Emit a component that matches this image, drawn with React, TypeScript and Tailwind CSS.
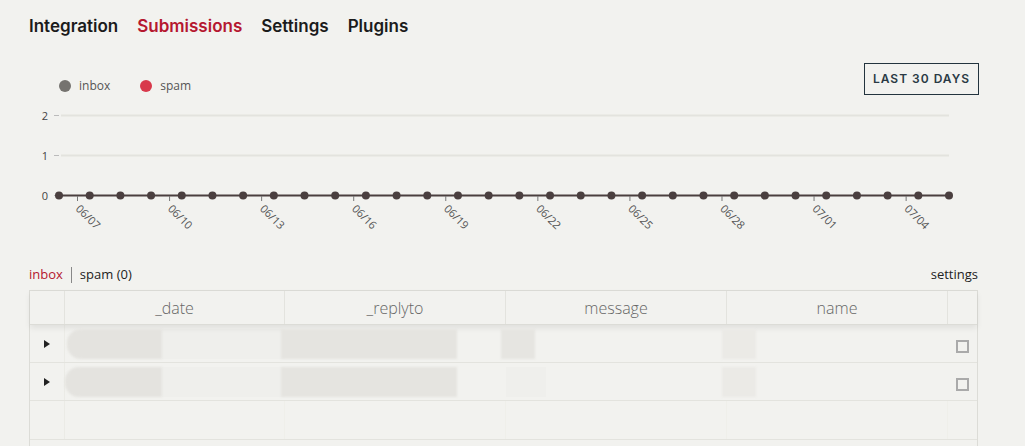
import React from "react";

const points = Array.from({ length: 30 }, (_, i) => 30 + (890 / 29) * i);
const ticks = ["06/07", "06/10", "06/13", "06/16", "06/19", "06/22", "06/25", "06/28", "07/01", "07/04"];

function Chart() {
  return (
    <svg width="949" height="140" viewBox="0 0 949 140" className="block" style={{ fontFamily: "'Open Sans', sans-serif" }}>
      {[0, 1, 2].map((v) => {
        const y = 95 - v * 40 + 0.5;
        return (
          <g key={v}>
            {v > 0 && <line x1="32" x2="920" y1={y} y2={y} stroke="#e3e3de" strokeWidth="2" />}
            <line x1="25" x2="30" y1={y} y2={y} stroke="#bbb" strokeWidth="1" />
            <text x="19" y={y + 4} fontSize="11" fill="#444" textAnchor="end">{v}</text>
          </g>
        );
      })}
      <line x1="30" x2="920" y1="95.5" y2="95.5" stroke="#4a3f3f" strokeWidth="2" />
      {ticks.map((t, k) => {
        const x = 48.5 + 92.07 * k;
        return (
          <g key={t}>
            <line x1={x} x2={x} y1="96" y2="101" stroke="#777" strokeWidth="1" />
            <text x={x - 1} y="110" fontSize="11" fill="#555" transform={`rotate(45 ${x - 1} 108)`}>{t}</text>
          </g>
        );
      })}
      {points.map((x, i) => (
        <circle key={i} cx={x} cy="95.5" r="4" fill="#4a3f3f" />
      ))}
    </svg>
  );
}

function Blob({ w, ml = 0, shade = "#e2e1dd", round = false }: { w: number; ml?: number; shade?: string; round?: boolean }) {
  return (
    <div
      className={`h-[30px] blur-[1px] ${round ? "rounded-l-[14px]" : ""}`}
      style={{ width: w, marginLeft: ml, background: shade }}
    />
  );
}

export default function App() {
  const cols = ["_date", "_replyto", "message", "name"];
  return (
    <div className="min-h-[446px] w-[1025px] bg-[#f2f2ef] pl-[29px] pr-[47px] overflow-hidden" style={{ fontFamily: "'Open Sans', sans-serif" }}>
      <nav className="flex gap-[19px] pt-[14px] h-[50px] text-[17px] font-semibold tracking-[0px]" style={{ fontFamily: "Inter, sans-serif" }}>
        <span className="text-[#1b1b1b]">Integration</span>
        <span className="text-[#b5172f]">Submissions</span>
        <span className="text-[#1b1b1b]">Settings</span>
        <span className="text-[#1b1b1b]">Plugins</span>
      </nav>

      <div className="flex justify-between items-start h-[50px] pt-[13px]">
        <div className="flex items-center mt-[14px] ml-[30px] text-[12px] text-[#555]">
          <span className="w-[12px] h-[12px] rounded-full bg-[#75736f]" />
          <span className="ml-[8px]">inbox</span>
          <span className="w-[12px] h-[12px] rounded-full bg-[#d8394b] ml-[30px]" />
          <span className="ml-[8px]">spam</span>
        </div>
        <button className="w-[115px] h-[32px] border border-[#23343e] text-[#2a3a44] text-[12px] font-semibold tracking-[1px] mr-[-1px]" style={{ fontFamily: "Inter, sans-serif" }}>
          LAST 30 DAYS
        </button>
      </div>

      <Chart />

      <div className="flex justify-between items-center mt-[23px] h-[24px] text-[13px]">
        <div className="flex items-center">
          <span className="text-[#b5172f]">inbox</span>
          <span className="mx-[8px] h-[16px] w-px bg-[#888]" />
          <span className="text-[#222]">spam (0)</span>
        </div>
        <span className="text-[#222]">settings</span>
      </div>

      <div className="mt-[3px] border-l border-r border-t border-[#dcdcd7] w-[949px]">
        <div className="flex h-[34px] border-b border-[#dcdcd7] shadow-[0_3px_6px_rgba(0,0,0,0.08)] relative text-[16px] text-[#666] font-light">
          <div className="w-[35px] border-r border-[#e3e3de]" />
          {cols.map((c, i) => (
            <div key={c} className={`${i === 0 ? "w-[220px]" : "w-[221px]"} flex items-center justify-center border-r border-[#e3e3de]`}>
              {c}
            </div>
          ))}
          <div className="flex-1" />
        </div>
        {[0, 1].map((r) => (
          <div key={r} className="flex h-[38px] border-b border-[#e3e3de]">
            <div className="w-[35px] flex items-center justify-center border-r border-[#ebebe6]">
              <svg width="8" height="10" viewBox="0 0 8 10"><path d="M1 1 L7 5 L1 9 Z" fill="#222" /></svg>
            </div>
            <div className="w-[220px] flex items-center">
              <Blob w={r === 0 ? 95 : 97} ml={r === 0 ? 2 : 0} round shade="#e4e3df" />
              <div className="h-[30px] flex-1 bg-[#efefec]" />
            </div>
            <div className="w-[221px] flex items-center">
              <Blob w={176} ml={-4} shade="#e5e4e0" />
            </div>
            <div className="w-[221px] flex items-center">
              {r === 0 ? <Blob w={34} ml={-5} shade="#e6e5e1" /> : <div className="h-[30px] w-[40px] bg-[#efefec]" />}
            </div>
            <div className="w-[221px] flex items-center">
              <Blob w={34} ml={-5} shade="#ebeae6" />
            </div>
            <div className="flex-1 flex items-center justify-center">
              <div className="w-[13px] h-[13px] border-2 border-[#aaa] mt-[6px]" />
            </div>
          </div>
        ))}
        <div className="flex h-[39px] border-b border-[#e3e3de]">
          <div className="w-[35px] border-r border-[#ebebe6]" />
          {cols.map((c, i) => (
            <div key={c} className={`${i === 0 ? "w-[220px]" : "w-[221px]"} border-r border-[#efefea]`} />
          ))}
        </div>
        <div className="h-[20px]" />
      </div>
    </div>
  );
}
